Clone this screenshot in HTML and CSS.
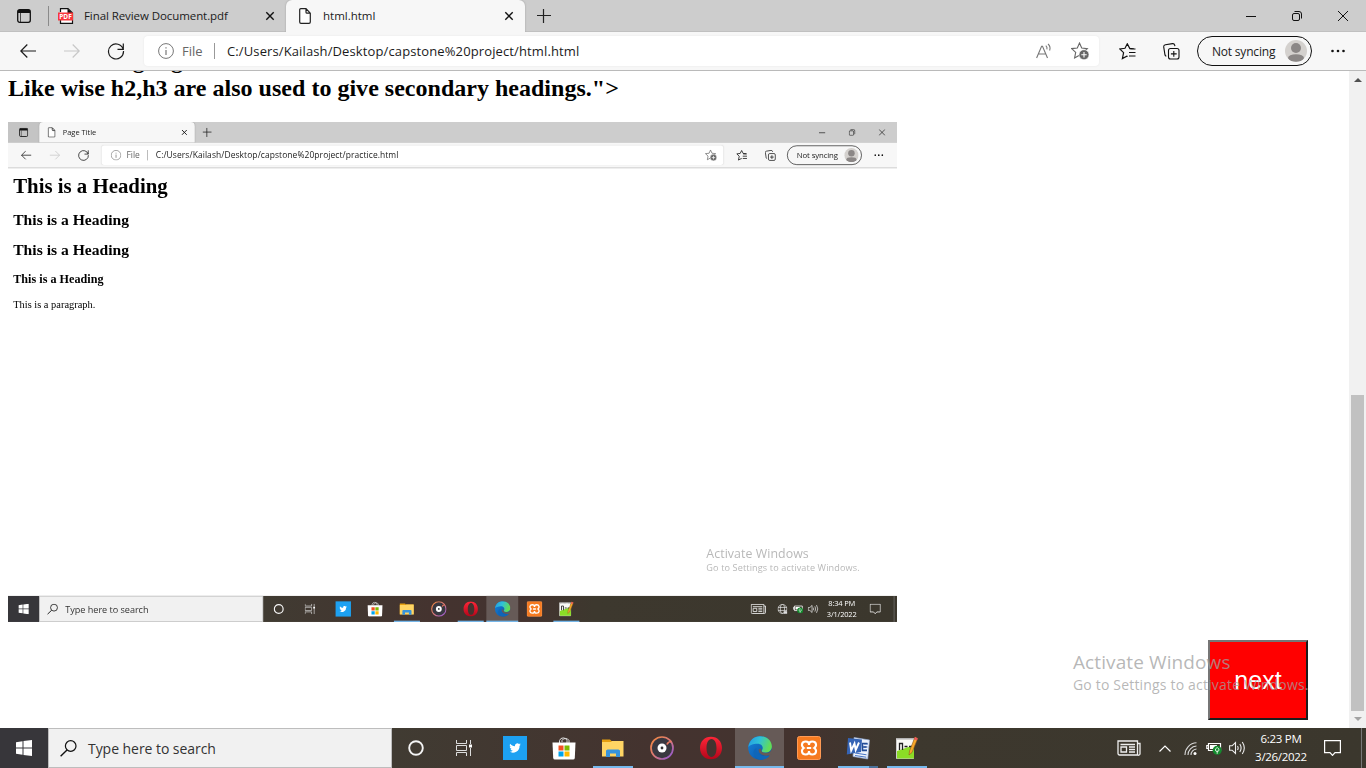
FILE: index.html
```html
<!DOCTYPE html>
<html lang="en">
<head>
<meta charset="utf-8">
<title>html.html</title>
<link rel="stylesheet" href="styles.css">
</head>
<body>
<svg class="sprite" aria-hidden="true">
  <defs>
    <linearGradient id="g-groove" x1="0" y1="0" x2="1" y2="1"><stop offset="0" stop-color="#f58a3c"/><stop offset=".5" stop-color="#d87878"/><stop offset="1" stop-color="#8a55e0"/></linearGradient>
    <linearGradient id="g-opera" x1="0" y1="0" x2="0" y2="1"><stop offset="0" stop-color="#ff2638"/><stop offset="1" stop-color="#b3061a"/></linearGradient>
    <linearGradient id="g-edge" x1="0" y1="0" x2="1" y2=".3"><stop offset="0" stop-color="#2399e5"/><stop offset=".5" stop-color="#2fc1d8"/><stop offset="1" stop-color="#62dc57"/></linearGradient>
    <linearGradient id="g-edge2" x1="0" y1="0" x2="1" y2="1"><stop offset="0" stop-color="#1583dc"/><stop offset="1" stop-color="#0a4fa0"/></linearGradient>
  </defs>
  <symbol id="i-tabs" viewBox="0 0 14 14"><rect x=".7" y=".7" width="12.6" height="12.6" rx="2" fill="none" stroke="#111" stroke-width="1.3"/><path d="M1 1h12v3H1z" fill="#111"/><path d="M3.5 4v9" stroke="#111" stroke-width=".7"/></symbol>
  <symbol id="i-pdf" viewBox="0 0 16 16"><path d="M2.500 4V.6h7.500L14.500 5v10.400h-12V11" fill="#fff" stroke="#111" stroke-width="1.2"/><path d="M9.500.6v4.900h5z" fill="#111"/><rect y="4.500" width="15" height="8" fill="#f8363b"/><text x="7.500" y="10.800" text-anchor="middle" class="pdf-label">PDF</text></symbol>
  <symbol id="i-page" viewBox="0 0 12 16"><path d="M1.800.7h5.200l4.300 4.500v8.800a1.300 1.300 0 0 1-1.300 1.300H2A1.300 1.300 0 0 1 .7 14V1.800A1.100 1.100 0 0 1 1.800.7zM7 .9v3.300a1 1 0 0 0 1 1h3" fill="#fff" stroke="#222" stroke-width="1.200"/></symbol>
  <symbol id="i-x" viewBox="0 0 10 10"><path d="M1.300 1.300l7.400 7.400M8.700 1.300l-7.400 7.400" stroke="#111" stroke-width="1.400"/></symbol>
  <symbol id="i-plus" viewBox="0 0 14 14"><path d="M6.500 0v14M0 6.500h14" stroke="#222" stroke-width="1.200"/></symbol>
  <symbol id="i-min" viewBox="0 0 10 10"><path d="M0 5.500h10" stroke="#111"/></symbol>
  <symbol id="i-restore" viewBox="0 0 10 10"><rect x=".5" y="2.500" width="7" height="7" rx="1.500" fill="none" stroke="#111"/><path d="M2.500.5H7A2.500 2.500 0 0 1 9.500 3v4.500" fill="none" stroke="#111"/></symbol>
  <symbol id="i-close" viewBox="0 0 10 10"><path d="M0 0l10 10M10 0L0 10" stroke="#111" stroke-width="1"/></symbol>
  <symbol id="i-arrow" viewBox="0 0 16 14"><path d="M16 7H.8M7.300.5L.8 7l6.500 6.500" fill="none" stroke="currentColor" stroke-width="1.200"/></symbol>
  <symbol id="i-reload" viewBox="0 0 18 18"><path d="M16.200 7.300A7.500 7.500 0 1 0 16.500 9M16.300 1.500v5.800h-5.800" fill="none" stroke="#1b1b1b" stroke-width="1.200"/></symbol>
  <symbol id="i-info" viewBox="0 0 16 16"><circle cx="8" cy="8" r="7.400" fill="none" stroke="#777"/><path d="M8 7v5M8 4.200v1.300" stroke="#777" stroke-width="1.200"/></symbol>
  <symbol id="i-read" viewBox="0 0 16 16"><path d="M.6 15L5.600 3.200h.9l5 11.800M2.300 11h7.500M9.800 2.600c1.200 1 1.500 2.300 1.100 3.800M12 1c2 1.700 2.500 4 1.600 6.500" fill="none" stroke="#777" stroke-width="1.100"/></symbol>
  <symbol id="i-star" viewBox="0 0 18 18"><path d="M8.500 1l2.200 5 5.600.6-4.100 3.800 1.200 5.600-4.900-2.800L3.600 16l1.100-5.600L.7 6.600 6.300 6z" fill="none" stroke="#666" stroke-width="1.100"/><circle cx="13" cy="12.700" r="5" fill="#666" stroke="#fff" stroke-width=".6"/><path d="M13 10v5.400M10.300 12.700h5.400" stroke="#fff" stroke-width="1.100"/></symbol>
  <symbol id="i-favs" viewBox="0 0 17 17"><path d="M15 5.800l-4.300-.4L8.300.8 6 5.300l-5.200.6 3.800 3.700-1.200 5.900 4.400-2.400.8.500M10.500 6h6M10 9.500h6.500M10 13h6.500" fill="none" stroke="#111" stroke-width="1.200"/></symbol>
  <symbol id="i-coll" viewBox="0 0 17 17"><rect x="5.500" y="5.500" width="10.500" height="10.500" rx="2" fill="none" stroke="#111" stroke-width="1.100"/><path d="M10.800 8v5.800M7.900 10.900h5.800M3.300 13.200A2 2 0 0 1 2 12L.7 3.900A2 2 0 0 1 2.400 1.800L9.500.6a2 2 0 0 1 2.200 1.500l.2 1" fill="none" stroke="#111" stroke-width="1.100"/></symbol>
  <symbol id="i-avatar" viewBox="0 0 22 22"><clipPath id="c-av"><circle cx="11" cy="11" r="11"/></clipPath><circle cx="11" cy="11" r="11" fill="#d4d1ce"/><g fill="#8b8786" clip-path="url(#c-av)"><circle cx="11" cy="8" r="5"/><ellipse cx="11" cy="18" rx="8" ry="3.800"/></g></symbol>
  <symbol id="i-dots" viewBox="0 0 14 4"><g fill="#111"><circle cx="1.500" cy="2" r="1.300"/><circle cx="7" cy="2" r="1.300"/><circle cx="12.500" cy="2" r="1.300"/></g></symbol>
  <symbol id="i-win" viewBox="0 0 16 16"><path d="M0 2.200L6.500 1.300V7.500H0zM7.500 1.100L16 0v7.500H7.500zM0 8.500h6.500v6.200L0 13.800zM7.500 8.500H16V16l-8.500-1.100z" fill="#fff"/></symbol>
  <symbol id="i-search" viewBox="0 0 17 17"><circle cx="10.700" cy="6" r="5.300" fill="none" stroke="#111" stroke-width="1.200"/><path d="M7 10L.6 16.200" stroke="#111" stroke-width="1.400"/></symbol>
  <symbol id="i-cortana" viewBox="0 0 16 16"><circle cx="8" cy="8" r="6.800" fill="none" stroke="#f4f4f4" stroke-width="1.900"/></symbol>
  <symbol id="i-task" viewBox="0 0 16 16"><path d="M.5 0v3.500h10V0M.5 16v-3.500h10V16M.5 5.500h10v5H.5zM14.500 0v4M14.500 8v8" fill="none" stroke="#ddd"/><rect x="13" y="4.500" width="3" height="3" fill="#fff"/></symbol>
  <symbol id="i-tw" viewBox="0 0 24 24"><rect width="24" height="24" fill="#1da1f2"/><path transform="translate(6 6) scale(.5)" d="M23.600 4.900c-.8.400-1.700.6-2.700.8 1-.6 1.700-1.500 2-2.600-.9.500-1.900.9-3 1.100a4.700 4.700 0 0 0-8 4.300C8 8.300 4.500 6.400 2.200 3.500a4.700 4.700 0 0 0 1.400 6.300c-.8 0-1.500-.2-2.100-.6 0 2.300 1.500 4.200 3.800 4.700-.7.200-1.400.2-2.100.1.600 1.900 2.300 3.200 4.400 3.300A9.500 9.500 0 0 1 .6 19.200a13.300 13.300 0 0 0 20.500-11.900c1-.6 1.800-1.500 2.500-2.400z" fill="#fff"/></symbol>
  <symbol id="i-store" viewBox="0 0 24 24"><path d="M7.500 7V4.500a4 4 0 0 1 7.500 0V7M10 6V4.500a4 4 0 0 1 7 0V7" fill="none" stroke="#ddd" stroke-width="1"/><path d="M.5 6.500h23L22.800 22q-.2 1.500-1.700 1.500H2.900q-1.500 0-1.700-1.500z" fill="#fff"/><path d="M6.500 9.500h5v5h-5z" fill="#f25022"/><path d="M12.500 9.500h5v5h-5z" fill="#7fba00"/><path d="M6.500 15.500h5v5h-5z" fill="#00a4ef"/><path d="M12.500 15.500h5v5h-5z" fill="#ffb900"/></symbol>
  <symbol id="i-files" viewBox="0 0 24 24"><path d="M1 3.500h8l1.500 1.500H22v15H1z" fill="#e6a010"/><path d="M1 6h9l1-1h11.500v15.500H1z" fill="#ffd564"/><path d="M5 21v-6.500l1.500-1h11l1.500 1V21h-4v-3.500H9V21z" fill="#3894dc"/></symbol>
  <symbol id="i-groove" viewBox="0 0 24 24"><circle cx="12" cy="12" r="11" fill="#393840" stroke="url(#g-groove)" stroke-width="1.700"/><path d="M17 8.500q1-3 4.500-3" fill="none" stroke="#ed7b60" stroke-width="1.700"/><circle cx="12" cy="12" r="4.500" fill="#fff"/><circle cx="12" cy="12" r="1.400" fill="#333"/></symbol>
  <symbol id="i-opera" viewBox="0 0 24 24"><path fill-rule="evenodd" d="M12 .7C5.500.7 1 5.500 1 12s4.500 11.300 11 11.300S23 18.500 23 12 18.500.7 12 .7zM12.500 3c3.100 0 5 3.700 5 9s-1.900 9-5 9-5-3.700-5-9 1.900-9 5-9z" fill="url(#g-opera)"/></symbol>
  <symbol id="i-edge" viewBox="0 0 24 24"><circle cx="12" cy="12" r="11.800" fill="url(#g-edge2)"/><path d="M.3 11C1.500 4 6.300.2 12 .2c7 0 11.900 5 11.900 10.300 0 3.800-2.900 6.100-6.500 6.100-3.300 0-4.300-1.300-3.300-2.600 1.600-2.200.2-6.300-4.600-6.300C5 7.700 1.500 9.300.3 11z" fill="url(#g-edge)"/><path d="M8.500 12c-1 6 4.500 9.500 13.200 7.500-2 3-6 4.700-10 4.200C4.700 21 3.500 14 8.500 12z" fill="#0f66b8"/><path d="M13.500 12.500c-.8 1.300-1 4 4 4.500 3 .1 5-1 6.500-3.500v4l-2.500 1.800C16 21 9 17.500 11 13z" fill="#665a57"/></symbol>
  <symbol id="i-xampp" viewBox="0 0 24 24"><rect x=".5" y=".5" width="23" height="23" rx="2" fill="#f67a20" stroke="#ff9a55"/><path d="M12 9V8.500C12 6.500 10.800 5.500 8.700 5.500 4.500 5.500 3.800 10 6.800 12c-3 2-2.300 6.500 1.900 6.500 2.100 0 3.300-1 3.300-3V15M12 15v.5c0 2 1.200 3 3.300 3 4.200 0 4.900-4.500 1.900-6.500 3-2 2.300-6.500-1.900-6.500-2.100 0-3.300 1-3.300 3M9.800 12h4.400" fill="none" stroke="#fff" stroke-width="2.100"/></symbol>
  <symbol id="i-word" viewBox="0 0 24 24"><path d="M8 1.500l15.500 2.500-1.800 19L7 20.500z" fill="#eef3fc" stroke="#8fa7d2" stroke-width=".7"/><path d="M9 17l11.500 1.800M9 19.500l11.300 1.700M18 8h4M18 11h3.500M17 14h4" stroke="#4774c4"/><path d="M2 2l14 1.500-1 12.500L.8 18.500z" fill="#3564b5"/><path d="M4 6.500l1.200 8 3.300-7 1.200 6.500L13 6.500" fill="none" stroke="#fff" stroke-width="1.900"/><path d="M21.500 7.500h-5v7h4.500M16.500 11h4" fill="none" stroke="#234c96" stroke-width="1.500"/></symbol>
  <symbol id="i-npp" viewBox="0 0 24 24"><path d="M1.500 2.500h17v20h-17z" fill="#fafaf7" stroke="#cdcdcd"/><path d="M2 15l17-6v13.500H2z" fill="#8bdc26"/><path d="M4.500 14V7.500h3V14M9.500 10.500h3M14 10.500h3" fill="none" stroke="#222" stroke-width="1.300"/><path d="M2.500 3h16" stroke="#666" stroke-dasharray="1 1"/><path d="M20 1l2.700 1.500-5.700 14-3 2.500.5-4z" fill="#f7a72a" stroke="#8b5b1c" stroke-width=".6"/><path d="M20 1l2.700 1.500-1 2-2.600-1.300z" fill="#ed5360"/></symbol>
  <symbol id="i-news" viewBox="0 0 24 16"><path d="M1 1h19.500v14H2.500A1.500 1.500 0 0 1 1 13.500zM20.500 3.500H23v10a1.500 1.500 0 0 1-2.500 1.300M3.500 4.500h14.500" fill="none" stroke="#eee" stroke-width="1.300"/><path d="M4 7h5.500v5H4zM12 7h6M12 9.500h6M12 12h6" fill="none" stroke="#eee" stroke-width="1.300"/></symbol>
  <symbol id="i-chev" viewBox="0 0 12 7"><path d="M.5 6.500L6 1l5.500 5.500" fill="none" stroke="#fff" stroke-width="1.200"/></symbol>
  <symbol id="i-wifi" viewBox="0 0 13 13"><path d="M1 13A12 12 0 0 1 12.500.8M4 13A9 9 0 0 1 12.500 4M7 13A6 6 0 0 1 12.500 7" fill="none" stroke="#d8d8d8" stroke-width="1.100"/><circle cx="11" cy="11.500" r="1.500" fill="#fff"/></symbol>
  <symbol id="i-globe" viewBox="0 0 14 14"><g fill="none" stroke="#ddd"><circle cx="7" cy="7" r="6"/><ellipse cx="7" cy="7" rx="2.800" ry="6"/><path d="M1 5h12M1 9h12"/></g><path d="M9 10h4.500v3.500H9z" fill="#ddd"/></symbol>
  <symbol id="i-batt" viewBox="0 0 16 13"><path d="M2.500 1.500h12v7h-12zM2.500 3.500H.8v3h1.700" fill="none" stroke="#fff" stroke-width="1.200"/><path d="M4 3h7v4H4z" fill="#fff"/><circle cx="11.200" cy="8.300" r="4.500" fill="#138b2e"/><path d="M11.200 11.800V8.500M9.500 6.900v1.800l1.700 1 1.700-1V6.900l-1.700-1.400z" fill="none" stroke="#fff" stroke-width=".8"/></symbol>
  <symbol id="i-vol" viewBox="0 0 17 14"><path d="M.6 4.800h2.500L6.500 1.500v11L3.100 9.200H.6zM8.500 5q1.300 2 0 4M10.800 3q2.600 4 0 8M13.300 1q4 6 0 12" fill="none" stroke="#eee" stroke-width="1.100"/></symbol>
  <symbol id="i-note" viewBox="0 0 17 16"><path d="M.6.600h15.800v12H11l-2.500 2.800L6 12.600H.6z" fill="none" stroke="#fff" stroke-width="1.200"/></symbol>
</svg>

<div class="desktop">
  <header class="tabstrip">
    <div class="tab-actions"><svg class="s14"><use href="#i-tabs"/></svg></div>
    <div class="tab idle"><svg class="s16"><use href="#i-pdf"/></svg><span class="tab-title t-pdf">Final Review Document.pdf</span><svg class="s10"><use href="#i-x"/></svg></div>
    <div class="tab current"><svg class="page"><use href="#i-page"/></svg><span class="tab-title t-html">html.html</span><svg class="s10"><use href="#i-x"/></svg></div>
    <svg class="newtab"><use href="#i-plus"/></svg>
    <div class="winbtns"><svg class="s10"><use href="#i-min"/></svg><svg class="s10"><use href="#i-restore"/></svg><svg class="s10"><use href="#i-close"/></svg></div>
  </header>
  <nav class="toolbar">
    <div class="navs"><svg class="arrow"><use href="#i-arrow"/></svg><svg class="arrow fwd"><use href="#i-arrow"/></svg><svg class="s18"><use href="#i-reload"/></svg></div>
    <div class="address"><svg class="s16"><use href="#i-info"/></svg><span class="scheme">File</span><i class="bar"></i><span class="url">C:/Users/Kailash/Desktop/capstone%20project/html.html</span><svg class="s16 read"><use href="#i-read"/></svg><svg class="s18"><use href="#i-star"/></svg></div>
    <svg class="s17 favs"><use href="#i-favs"/></svg><svg class="s17 coll"><use href="#i-coll"/></svg>
    <div class="profile"><span>Not syncing</span><svg class="avatar"><use href="#i-avatar"/></svg></div>
    <svg class="dots"><use href="#i-dots"/></svg>
  </nav>
  <main class="viewport">
    <div class="page-body">
      <h2 class="lesson">First heading tag<br>Like wise h2,h3 are also used to give secondary headings."&gt;</h2>
      <div class="shot">
        <div class="desktop mini">
          <header class="tabstrip">
            <div class="tab-actions shade"><svg class="s14"><use href="#i-tabs"/></svg></div>
            <div class="tab current"><svg class="page"><use href="#i-page"/></svg><span class="tab-title t-page">Page Title</span><svg class="s10"><use href="#i-x"/></svg></div>
            <svg class="newtab"><use href="#i-plus"/></svg>
            <div class="winbtns"><svg class="s10"><use href="#i-min"/></svg><svg class="s10"><use href="#i-restore"/></svg><svg class="s10"><use href="#i-close"/></svg></div>
          </header>
          <nav class="toolbar">
            <div class="navs"><svg class="arrow"><use href="#i-arrow"/></svg><svg class="arrow fwd"><use href="#i-arrow"/></svg><svg class="s18"><use href="#i-reload"/></svg></div>
            <div class="address"><svg class="s16"><use href="#i-info"/></svg><span class="scheme">File</span><i class="bar"></i><span class="url">C:/Users/Kailash/Desktop/capstone%20project/practice.html</span><svg class="s18"><use href="#i-star"/></svg></div>
            <svg class="s17 favs"><use href="#i-favs"/></svg><svg class="s17 coll"><use href="#i-coll"/></svg>
            <div class="profile"><span>Not syncing</span><svg class="avatar"><use href="#i-avatar"/></svg></div>
            <svg class="dots"><use href="#i-dots"/></svg>
          </nav>
          <main class="viewport practice">
            <h1>This is a Heading</h1>
            <h2>This is a Heading</h2>
            <h2>This is a Heading</h2>
            <h3>This is a Heading</h3>
            <p>This is a paragraph.</p>
          </main>
          <footer class="taskbar">
            <div class="start"><svg class="s16"><use href="#i-win"/></svg></div>
            <div class="search"><svg class="s17"><use href="#i-search"/></svg><span>Type here to search</span></div>
            <div class="apps">
              <div class="app"><svg class="s16"><use href="#i-cortana"/></svg></div><div class="app"><svg class="s16"><use href="#i-task"/></svg></div>
              <div class="app"><svg><use href="#i-tw"/></svg></div><div class="app"><svg><use href="#i-store"/></svg></div>
              <div class="app open"><svg><use href="#i-files"/></svg></div><div class="app"><svg><use href="#i-groove"/></svg></div>
              <div class="app open"><svg><use href="#i-opera"/></svg></div><div class="app open active"><svg><use href="#i-edge"/></svg></div>
              <div class="app"><svg><use href="#i-xampp"/></svg></div><div class="app open"><svg><use href="#i-npp"/></svg></div>
            </div>
            <div class="tray"><svg class="news"><use href="#i-news"/></svg><svg class="globe"><use href="#i-globe"/></svg><svg class="batt"><use href="#i-batt"/></svg><svg class="vol"><use href="#i-vol"/></svg><div class="clock"><span>8:34 PM</span><span class="date short">3/1/2022</span></div><svg class="note"><use href="#i-note"/></svg></div>
          </footer>
          <div class="watermark"><b>Activate Windows</b><span>Go to Settings to activate Windows.</span></div>
        </div>
      </div>
      <button class="next">next</button>
    </div>
    <div class="scrollbar"><i class="up"></i><i class="thumb"></i><i class="down"></i></div>
  </main>
  <footer class="taskbar">
    <div class="start"><svg class="s16"><use href="#i-win"/></svg></div>
    <div class="search"><svg class="s17"><use href="#i-search"/></svg><span>Type here to search</span></div>
    <div class="apps">
      <div class="app"><svg class="s16"><use href="#i-cortana"/></svg></div><div class="app"><svg class="s16"><use href="#i-task"/></svg></div>
      <div class="app"><svg><use href="#i-tw"/></svg></div><div class="app"><svg><use href="#i-store"/></svg></div>
      <div class="app open"><svg><use href="#i-files"/></svg></div><div class="app"><svg><use href="#i-groove"/></svg></div>
      <div class="app"><svg><use href="#i-opera"/></svg></div><div class="app open active"><svg><use href="#i-edge"/></svg></div>
      <div class="app"><svg><use href="#i-xampp"/></svg></div><div class="app open stacked"><svg><use href="#i-word"/></svg></div><div class="app open"><svg><use href="#i-npp"/></svg></div>
    </div>
    <div class="tray"><svg class="news"><use href="#i-news"/></svg><svg class="chev"><use href="#i-chev"/></svg><svg class="wifi"><use href="#i-wifi"/></svg><svg class="batt"><use href="#i-batt"/></svg><svg class="vol"><use href="#i-vol"/></svg><div class="clock"><span>6:23 PM</span><span class="date">3/26/2022</span></div><svg class="note"><use href="#i-note"/></svg></div>
  </footer>
  <div class="watermark"><b>Activate Windows</b><span>Go to Settings to activate Windows.</span></div>
</div>
</body>
</html>
```
FILE: styles.css
```css
* { box-sizing: border-box; }
body { margin: 0; overflow: hidden; }
svg { display: block; flex: none; width: 24px; height: 24px; }
.sprite { position: absolute; width: 0; height: 0; }
.pdf-label { font: bold 6.5px "Open Sans", sans-serif; fill: #fff; }
.s10 { width: 10px; height: 10px; }
.s14 { width: 14px; height: 14px; }
.s16 { width: 16px; height: 16px; }
.s17 { width: 17px; height: 17px; }
.s18 { width: 18px; height: 18px; }

.desktop {
  position: relative;
  display: flex;
  flex-direction: column;
  width: 1366px;
  height: 768px;
  overflow: hidden;
  background: #fff;
  font-family: "Open Sans", sans-serif;
  color: #1b1b1b;
  white-space: nowrap;
}

/* tab strip */
.tabstrip { display: flex; align-items: center; height: 32px; flex: none; background: #cdcdcd; box-shadow: inset 0 -1px #c0c0c0; }
.tab-actions { display: flex; align-items: center; justify-content: center; width: 48px; height: 32px; border-right: 1px solid transparent; }
.tab-actions.shade { background: #c4c4c4; }
.tab { display: flex; align-items: center; width: 239px; height: 32px; padding-right: 11px; }
.tab.idle { width: 238px; padding: 0 11px 0 10px; background: linear-gradient(#8a8a8a, #8a8a8a) 0 50% / 1px 20px no-repeat; }
.tab.current { padding-left: 13px; background: #f7f7f7; border-radius: 6px 6px 0 0; box-shadow: 0 0 2px #999; clip-path: inset(0 -3px); }
.page { width: 12px; height: 16px; }
.tab-title { flex: 1; font-size: 11.5px; line-height: 18px; margin-left: 12px; }
.t-pdf { margin-left: 10px; letter-spacing: -.08px; }
.t-page { margin-left: 11px; }
.newtab { width: 14px; height: 14px; margin-left: 12px; }
.winbtns { display: flex; gap: 36px; margin-left: auto; margin-right: 18px; }

/* toolbar */
.toolbar { display: flex; align-items: center; height: 39px; flex: none; background: #f7f7f7; border-bottom: 1px solid #bababa; }
.navs { display: flex; align-items: center; width: 144px; padding-left: 20px; gap: 28px; }
.navs .s18 { margin-left: -1px; }
.arrow { width: 16px; height: 14px; }
.fwd { transform: scaleX(-1); color: #c8c8c8; }
.address { display: flex; align-items: center; width: 955px; height: 30px; padding: 0 10px 0 14px; background: #fff; border-radius: 4px; box-shadow: 0 0 2px #e4e4e4; }
.scheme { width: 32px; margin-left: 8px; font-size: 13px; color: #666; }
.bar { width: 1px; height: 16px; background: #999; }
.url { flex: 1; margin-left: 12px; font-size: 13px; letter-spacing: .12px; }
.read { margin-right: 19px; }
.favs { margin-left: 20px; }
.coll { margin-left: 27px; }
.profile { display: flex; align-items: center; justify-content: space-between; width: 115px; height: 30px; margin-left: 17px; padding: 0 4px 0 14px; border: 1px solid #111; border-radius: 15px; font-size: 12px; letter-spacing: -.2px; }
.avatar { width: 22px; height: 22px; }
.dots { width: 14px; height: 4px; margin-left: 19px; }

/* page */
.viewport { display: flex; height: 657px; flex: none; overflow: hidden; }
.page-body { display: flex; flex-direction: column; width: 1349px; padding: 0 41px 0 8px; }
.lesson { margin: -25px 0 0; font: bold 24px/28px "Liberation Serif", serif; height: 76px; color: #000; letter-spacing: .015px; }
.shot { width: 889px; height: 500px; overflow: hidden; }
.mini { transform: scale(.6508, .651); transform-origin: 0 0; filter: blur(.4px); }
.next { align-self: flex-end; width: 100px; height: 80px; margin-top: 18px; padding: 0; border: 2px solid; border-color: #767676 #1c1c1c #1c1c1c #767676; background: #f00; color: #fff; font: 25px "Liberation Sans", sans-serif; }
.scrollbar { display: flex; flex-direction: column; align-items: center; width: 17px; background: #f1f1f1; }
.up, .down { width: 0; height: 0; border: 4px solid transparent; }
.up { margin-top: 3px; border-bottom-color: #505050; }
.thumb { width: 13px; height: 316px; margin-top: 313px; background: #c1c1c1; }
.down { margin-top: 6px; border-top-color: #a3a3a3; }
.practice { display: block; padding: 8px; font: 16px "Liberation Serif", serif; color: #000; }
.practice h1 { margin: 0 0 20.400px; font-size: 32px; line-height: 38px; }
.practice h2 { margin: 0 0 19.900px; font-size: 24px; line-height: 27px; }
.practice h3 { margin: 0 0 18.700px; font-size: 18.720px; line-height: 21.500px; }
.practice p { margin: 0; line-height: 18px; }

/* taskbar */
.taskbar { display: flex; height: 40px; flex: none; background: linear-gradient(90deg, #37363a 0, #37363a 390px, #403b32 392px, #44332f 650px, #43332f 800px, #3d382e 900px, #3b372d); color: #fff; }
.start { display: flex; align-items: center; justify-content: center; width: 48px; }
.search { display: flex; align-items: center; width: 344px; padding-left: 11px; gap: 11px; background: #f1f1f1; border: 1px solid #bdbdbd; color: #333; font-size: 14px; letter-spacing: -.05px; }
.apps { display: flex; margin-left: -1px; }
.app { display: flex; align-items: center; justify-content: center; width: 49px; background: linear-gradient(#76b9ed, #76b9ed) 50% 100% / 0 2px no-repeat; }
.app:nth-child(2) { padding-right: 2px; }
.app:nth-child(3) { margin-left: 1px; }
.app.open { background-size: 40px 2px; }
.app.active { background-color: #665a57; background-size: 49px 2px; }
.app.stacked { background-image: linear-gradient(90deg, #76b9ed 31px, #4b729b 31px); }
.tray { display: flex; align-items: center; margin-left: auto; width: 250px; justify-content: flex-end; padding-right: 25px; background: linear-gradient(#777, #777) 245px 0 / 1px 40px no-repeat; }
.news { width: 24px; height: 16px; }
.chev { width: 12px; height: 7px; margin: 0 13px 0 18px; }
.wifi { width: 13px; height: 13px; margin-right: 9px; }
.globe { width: 16px; height: 16px; margin: 0 8px 0 17px; }
.batt { width: 16px; height: 13px; margin-right: 7px; }
.vol { width: 17px; height: 14px; margin-right: 9px; }
.clock { display: flex; flex-direction: column; align-items: center; width: 52px; margin-top: -1px; font-size: 11.500px; line-height: 18px; letter-spacing: -.3px; }
.note { width: 17px; height: 16px; margin-left: 17px; }

/* activation notice drawn over the whole desktop */
.watermark { position: absolute; left: 1073px; top: 650px; color: rgba(160, 160, 160, .75); }
.watermark b { display: block; font-weight: 400; font-size: 19px; line-height: 24px; letter-spacing: .1px; }
.watermark span { display: block; font-size: 14px; line-height: 22px; letter-spacing: .18px; }
```
